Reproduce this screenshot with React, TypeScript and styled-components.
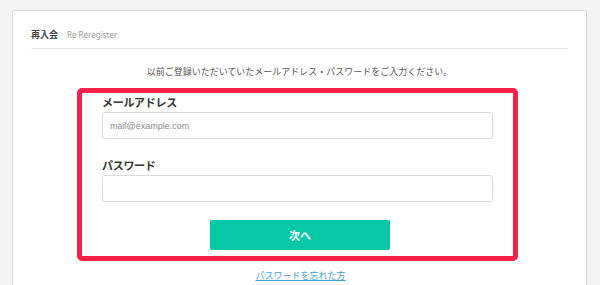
import React from "react";
import styled, { createGlobalStyle } from "styled-components";

const Global = createGlobalStyle`
  html, body { margin: 0; padding: 0; background: #f3f3f3; }
  body { font-family: "Noto Sans CJK JP", "Noto Sans", sans-serif; }
  * { box-sizing: border-box; }
`;

const Page = styled.div`
  padding: 10px 13px 0 12px;
  height: 285px;
  overflow: hidden;
`;

const Card = styled.div`
  background: #fff;
  border: 1px solid #dcdcdc;
  border-radius: 3px;
  padding: 0 18px;
  height: 320px;
  box-shadow: 0 0 2px rgba(0, 0, 0, 0.05);
`;

const Header = styled.div`
  display: flex;
  align-items: baseline;
  gap: 9px;
  padding: 18px 0 7px;
  border-bottom: 1px solid #e6e6e6;
  line-height: 12px;
`;

const Title = styled.span`
  font-size: 9px;
  font-weight: 700;
  color: #444;
`;

const Sub = styled.span`
  font-family: "Noto Sans", sans-serif;
  font-size: 8px;
  color: #999;
`;

const Lead = styled.p`
  margin: 16px 0 0;
  text-align: center;
  font-size: 9px;
  line-height: 14px;
  color: #555;
`;

const Highlight = styled.div`
  width: 441px;
  margin: 9px 0 0 46px;
  border: 5px solid #f41f4a;
  border-radius: 5px;
  padding: 2px 20px 6px;
  display: flex;
  flex-direction: column;
`;

const Label = styled.label<{ $gap?: number }>`
  display: block;
  margin-top: ${(p) => p.$gap ?? 0}px;
  font-size: 11px;
  line-height: 14px;
  font-weight: 700;
  color: #333;
  letter-spacing: -0.3px;
`;

const Input = styled.input`
  display: block;
  width: 100%;
  height: 27px;
  margin-top: 3px;
  border: 1px solid #dadada;
  border-radius: 3px;
  padding: 0 7px;
  font-family: "Liberation Sans", Arial, sans-serif;
  font-size: 9px;
  color: #333;
  background: #fff;
  outline: none;
  &::placeholder { color: #8a8a8a; }
`;

const Button = styled.button`
  width: 180px;
  height: 30px;
  margin: 18px 0 0 108px;
  border: none;
  border-radius: 2px;
  background: #05c8a6;
  color: #fff;
  font-family: inherit;
  font-size: 11px;
  font-weight: 700;
  cursor: pointer;
`;

const LinkRow = styled.div`
  margin-top: 5px;
  text-align: center;
  line-height: 12px;
  padding-left: 2px;
`;

const Forgot = styled.a`
  font-size: 9px;
  color: #3f9fe0;
  text-decoration: underline;
`;

export default function App() {
  return (
    <>
      <Global />
      <Page>
        <Card>
          <Header>
            <Title>再入会</Title>
            <Sub>Re Reregister</Sub>
          </Header>
          <Lead>以前ご登録いただいていたメールアドレス・パスワードをご入力ください。</Lead>
          <Highlight>
            <Label>メールアドレス</Label>
            <Input type="email" placeholder="mail@example.com" />
            <Label $gap={19}>パスワード</Label>
            <Input type="password" />
            <Button>次へ</Button>
          </Highlight>
          <LinkRow>
            <Forgot href="#">パスワードを忘れた方</Forgot>
          </LinkRow>
        </Card>
      </Page>
    </>
  );
}
